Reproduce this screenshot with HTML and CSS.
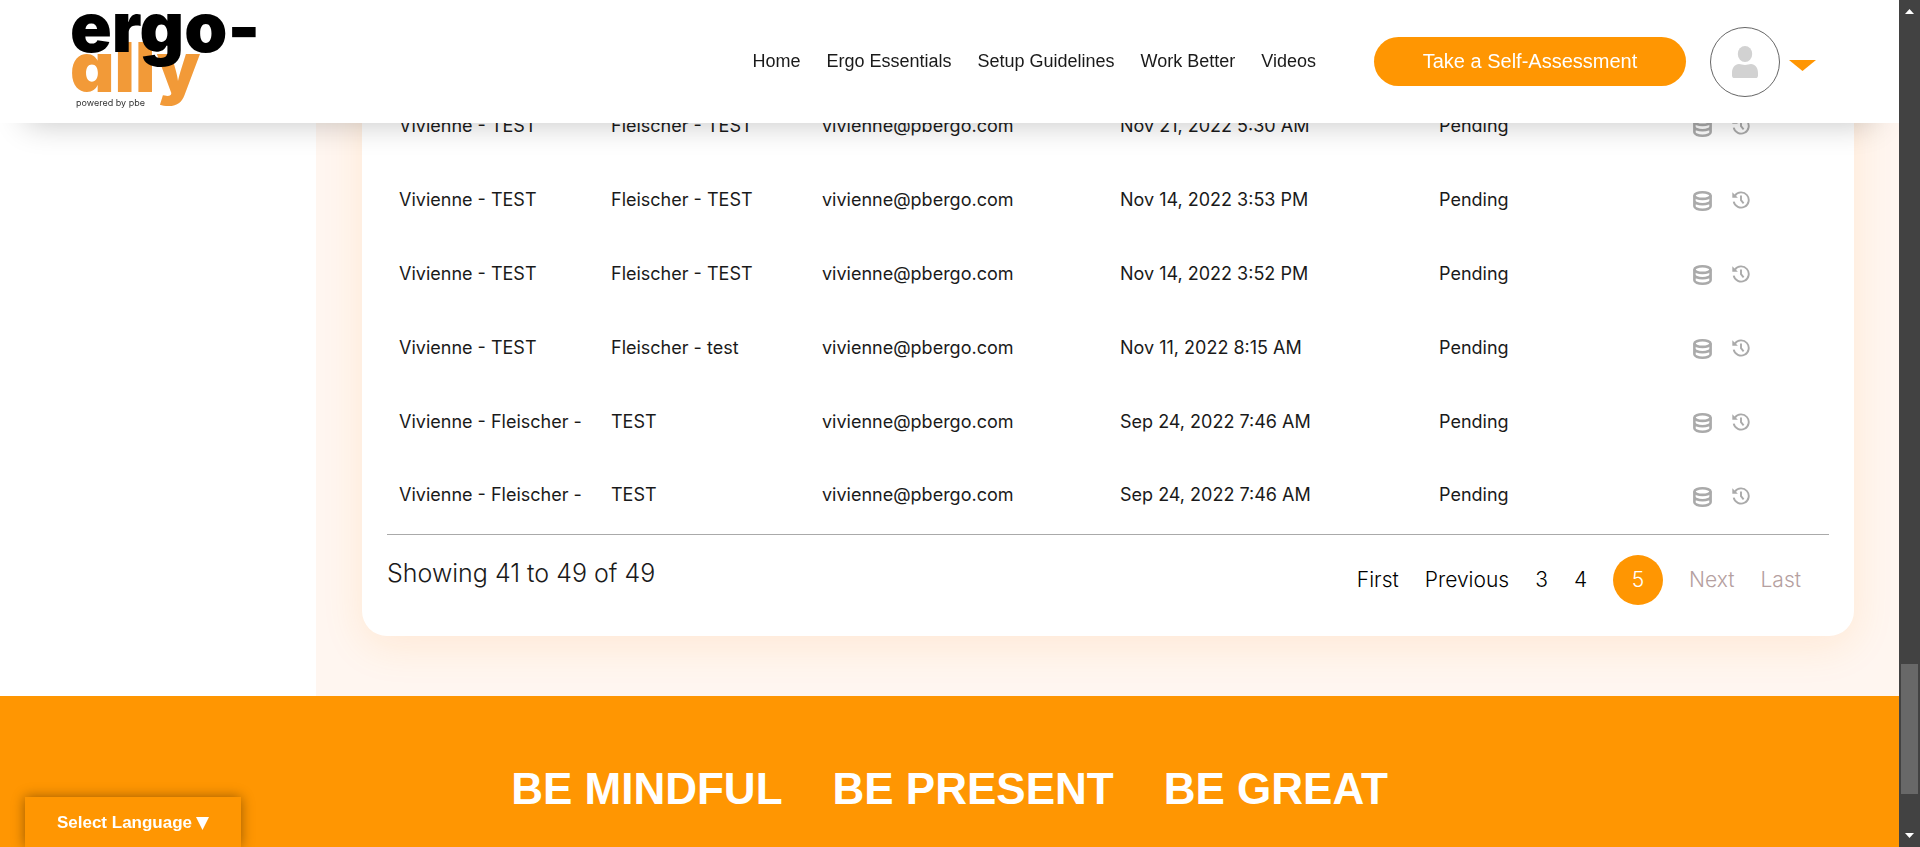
FILE: index.html
```html
<!DOCTYPE html>
<html lang="en">
<head>
<meta charset="utf-8">
<title>ergo-ally</title>
<link rel="stylesheet" href="styles.css">
</head>
<body>
<svg class="defs" aria-hidden="true">
  <symbol id="data" viewBox="0 0 19 20">
    <g fill="none" stroke="currentColor" stroke-width="2.6">
      <ellipse cx="9.5" cy="4.6" rx="8.1" ry="3.3"/>
      <path d="M1.4 4.6v10.600c0 2 3.600 3.500 8.100 3.500s8.100-1.500 8.100-3.500V4.600M1.400 9.700c0 2 3.600 3.500 8.100 3.500s8.100-1.500 8.100-3.500"/>
    </g>
  </symbol>
  <symbol id="history" viewBox="0 0 18 18">
    <g fill="none" stroke="currentColor" stroke-width="1.9">
      <path d="M2.9 4.6A7.6 7.6 0 1 1 1.7 10.6"/>
      <path d="M9 4.6v4.6l2.6 3.2"/>
    </g>
    <path d="M.3 1.2v5.6h5.6z" fill="currentColor"/>
  </symbol>
</svg>

<header class="topbar">
  <a class="logo" href="#" aria-label="ergo-ally, powered by pbe">
    <svg width="200" height="110" viewBox="0 0 200 110">
      <text class="logo-ally" x="-2" y="85">ally</text>
      <text class="logo-ergo" x="-2" y="45">ergo-</text>
      <text class="logo-tag" x="4" y="99">powered by pbe</text>
    </svg>
  </a>
  <nav class="menu">
    <a href="#">Home</a>
    <a href="#">Ergo Essentials</a>
    <a href="#">Setup Guidelines</a>
    <a href="#">Work Better</a>
    <a href="#">Videos</a>
  </nav>
  <button class="cta" type="button">Take a Self-Assessment</button>
  <button class="account" type="button" aria-label="Account">
    <span class="avatar">
      <svg width="26" height="32" viewBox="0 0 26 32"><g fill="#d2d2d2"><ellipse cx="13" cy="8" rx="7.2" ry="8"/><path d="M0 27c0-5.500 3-9 7-9 2 0 3.500 1 6 1s4-1 6-1c4 0 7 3.500 7 9v2.400c0 1.700-1 2.600-2.400 2.600H2.400C1 32 0 31.100 0 29.400z"/></g></svg>
    </span>
    <svg class="caret" width="27" height="11" viewBox="0 0 27 11"><path d="M0 0h27L13.5 11z" fill="#ff9602"/></svg>
  </button>
</header>

<main class="page">
  <aside class="side"></aside>
  <section class="content">
    <div class="card">
      <table class="list">
        <colgroup><col class="c-first"><col class="c-last"><col class="c-mail"><col class="c-date"><col class="c-status"><col class="c-act"></colgroup>
        <tbody>
          <tr><td>Vivienne - TEST</td><td>Fleischer - TEST</td><td>vivienne@pbergo.com</td><td>Nov 21, 2022 5:30 AM</td><td>Pending</td><td><div class="acts"><button type="button" aria-label="Data"><svg width="19" height="20"><use href="#data"/></svg></button><button type="button" aria-label="History"><svg width="18" height="18"><use href="#history"/></svg></button></div></td></tr>
          <tr><td>Vivienne - TEST</td><td>Fleischer - TEST</td><td>vivienne@pbergo.com</td><td>Nov 14, 2022 3:53 PM</td><td>Pending</td><td><div class="acts"><button type="button" aria-label="Data"><svg width="19" height="20"><use href="#data"/></svg></button><button type="button" aria-label="History"><svg width="18" height="18"><use href="#history"/></svg></button></div></td></tr>
          <tr><td>Vivienne - TEST</td><td>Fleischer - TEST</td><td>vivienne@pbergo.com</td><td>Nov 14, 2022 3:52 PM</td><td>Pending</td><td><div class="acts"><button type="button" aria-label="Data"><svg width="19" height="20"><use href="#data"/></svg></button><button type="button" aria-label="History"><svg width="18" height="18"><use href="#history"/></svg></button></div></td></tr>
          <tr><td>Vivienne - TEST</td><td>Fleischer - test</td><td>vivienne@pbergo.com</td><td>Nov 11, 2022 8:15 AM</td><td>Pending</td><td><div class="acts"><button type="button" aria-label="Data"><svg width="19" height="20"><use href="#data"/></svg></button><button type="button" aria-label="History"><svg width="18" height="18"><use href="#history"/></svg></button></div></td></tr>
          <tr><td>Vivienne - Fleischer -</td><td>TEST</td><td>vivienne@pbergo.com</td><td>Sep 24, 2022 7:46 AM</td><td>Pending</td><td><div class="acts"><button type="button" aria-label="Data"><svg width="19" height="20"><use href="#data"/></svg></button><button type="button" aria-label="History"><svg width="18" height="18"><use href="#history"/></svg></button></div></td></tr>
          <tr><td>Vivienne - Fleischer -</td><td>TEST</td><td>vivienne@pbergo.com</td><td>Sep 24, 2022 7:46 AM</td><td>Pending</td><td><div class="acts"><button type="button" aria-label="Data"><svg width="19" height="20"><use href="#data"/></svg></button><button type="button" aria-label="History"><svg width="18" height="18"><use href="#history"/></svg></button></div></td></tr>
        </tbody>
      </table>
      <div class="foot">
        <p class="count">Showing 41 to 49 of 49</p>
        <nav class="pager" aria-label="Pages">
          <a href="#">First</a>
          <a href="#">Previous</a>
          <a href="#">3</a>
          <a href="#">4</a>
          <a class="current" href="#" aria-current="page">5</a>
          <a class="off" href="#" aria-disabled="true">Next</a>
          <a class="off" href="#" aria-disabled="true">Last</a>
        </nav>
      </div>
    </div>
  </section>
</main>

<footer class="banner">
  <span>BE MINDFUL</span>
  <span>BE PRESENT</span>
  <span>BE GREAT</span>
</footer>

<button class="language" type="button">Select Language<svg width="13" height="13" viewBox="0 0 13 13"><path d="M0 0h13L6.5 13z" fill="#fff"/></svg></button>

<div class="scrollbar" aria-hidden="true">
  <svg width="9" height="5" viewBox="0 0 9 5"><path d="M4.5 0L9 5H0z" fill="#fff"/></svg>
  <div class="track"><div class="thumb"></div></div>
  <svg width="9" height="5" viewBox="0 0 9 5"><path d="M0 0h9L4.5 5z" fill="#fff"/></svg>
</div>
</body>
</html>
```
FILE: styles.css
```css
* { box-sizing: border-box; }

body {
  margin: 0;
  height: 100vh;
  padding-right: 21px;
  overflow: hidden;
  display: flex;
  flex-direction: column;
  background: #fff;
  color: #1a1a1a;
  font-family: "Liberation Sans", Arial, sans-serif;
}

a { color: inherit; text-decoration: none; }

button {
  margin: 0;
  padding: 0;
  border: 0;
  background: none;
  color: inherit;
  font: inherit;
  cursor: pointer;
}

svg { display: block; }
.defs { position: absolute; width: 0; height: 0; }

.topbar {
  position: fixed;
  z-index: 2;
  top: 0;
  left: 0;
  right: 21px;
  height: 123px;
  padding: 0 83px 0 72px;
  display: flex;
  align-items: center;
  background: #fff;
  box-shadow: 0 26px 32px -26px rgba(0, 0, 0, 0.24);
}

.logo { margin-right: auto; }
.logo svg { overflow: visible; }
.logo text { font-family: Inter, "Open Sans", sans-serif; }
.logo .logo-ergo { font-size: 69px; font-weight: 900; fill: #000; }
.logo .logo-ally { font-size: 69px; font-weight: 900; fill: #f29a38; font-feature-settings: "cv11"; }
.logo .logo-tag { font-size: 9px; fill: #333; }

.menu {
  display: flex;
  gap: 26px;
  margin-right: 58px;
  font-size: 18px;
}

.cta {
  width: 312px;
  height: 49px;
  margin-right: 24px;
  border-radius: 25px;
  background: #ff9602;
  color: #fff;
  font-size: 20px;
}

.account { display: flex; align-items: center; gap: 9px; }

.avatar {
  width: 70px;
  height: 70px;
  display: grid;
  place-items: center;
  border: 1px solid #666;
  border-radius: 50%;
}

.caret { margin-top: 8px; }

.page { flex: none; display: flex; }
.side { flex: none; width: 316px; }

.content {
  flex: 1;
  padding: 90px 45px 60px 46px;
  background: #fff6f0;
}

.card {
  padding: 0 25px 31px;
  border-radius: 0 0 25px 25px;
  background: #fff;
  box-shadow: 0 10px 40px rgba(255, 150, 30, 0.13);
}

.list {
  width: 100%;
  table-layout: fixed;
  border-collapse: collapse;
  border-bottom: 1px solid #aaa;
  font-family: Inter, "Noto Sans", sans-serif;
  font-size: 18px;
}

.list td { height: 74px; padding: 0 0 4px 12px; white-space: nowrap; }
.list td:last-child { padding: 0 0 0 12px; }
.c-first { width: 212px; }
.c-last { width: 211px; }
.c-mail { width: 298px; }
.c-date { width: 319px; }
.c-status { width: 254px; }

.acts {
  display: flex;
  align-items: flex-start;
  gap: 20px;
  color: #aaa;
}

.foot {
  display: flex;
  justify-content: space-between;
  align-items: flex-start;
  padding-top: 20px;
  font-family: Inter, "Noto Sans", sans-serif;
  font-weight: 300;
}

.count { margin: 0; font-size: 25px; line-height: 36px; }

.pager {
  display: flex;
  align-items: center;
  gap: 26px;
  padding-right: 28px;
  color: #000;
  font-size: 21px;
}

.pager .current {
  width: 50px;
  height: 50px;
  display: grid;
  place-items: center;
  border-radius: 50%;
  background: #ff9602;
  color: #fff;
}

.pager .off { color: #b5a0a0; }

.banner {
  flex: 1 0 auto;
  display: flex;
  justify-content: center;
  gap: 50px;
  padding-top: 67px;
  background: #ff9602;
  color: #fff;
  font-size: 44px;
  font-weight: 700;
  line-height: 52px;
}

.language {
  position: fixed;
  left: 25px;
  bottom: 0;
  width: 216px;
  height: 50px;
  padding-top: 2px;
  display: flex;
  align-items: center;
  justify-content: center;
  gap: 4px;
  background: #ff9602;
  box-shadow: 0 0 12px rgba(0, 0, 0, 0.4);
  color: #fff;
  font-size: 17px;
  font-weight: 700;
}

.scrollbar {
  position: fixed;
  z-index: 3;
  top: 0;
  right: 0;
  bottom: 0;
  width: 21px;
  padding: 9px 0;
  display: flex;
  flex-direction: column;
  align-items: center;
  background: #424242;
}

.track {
  flex: 1;
  display: flex;
  flex-direction: column;
  justify-content: flex-end;
  padding-bottom: 39px;
}

.thumb { width: 17px; height: 130px; background: #686868; }
```
